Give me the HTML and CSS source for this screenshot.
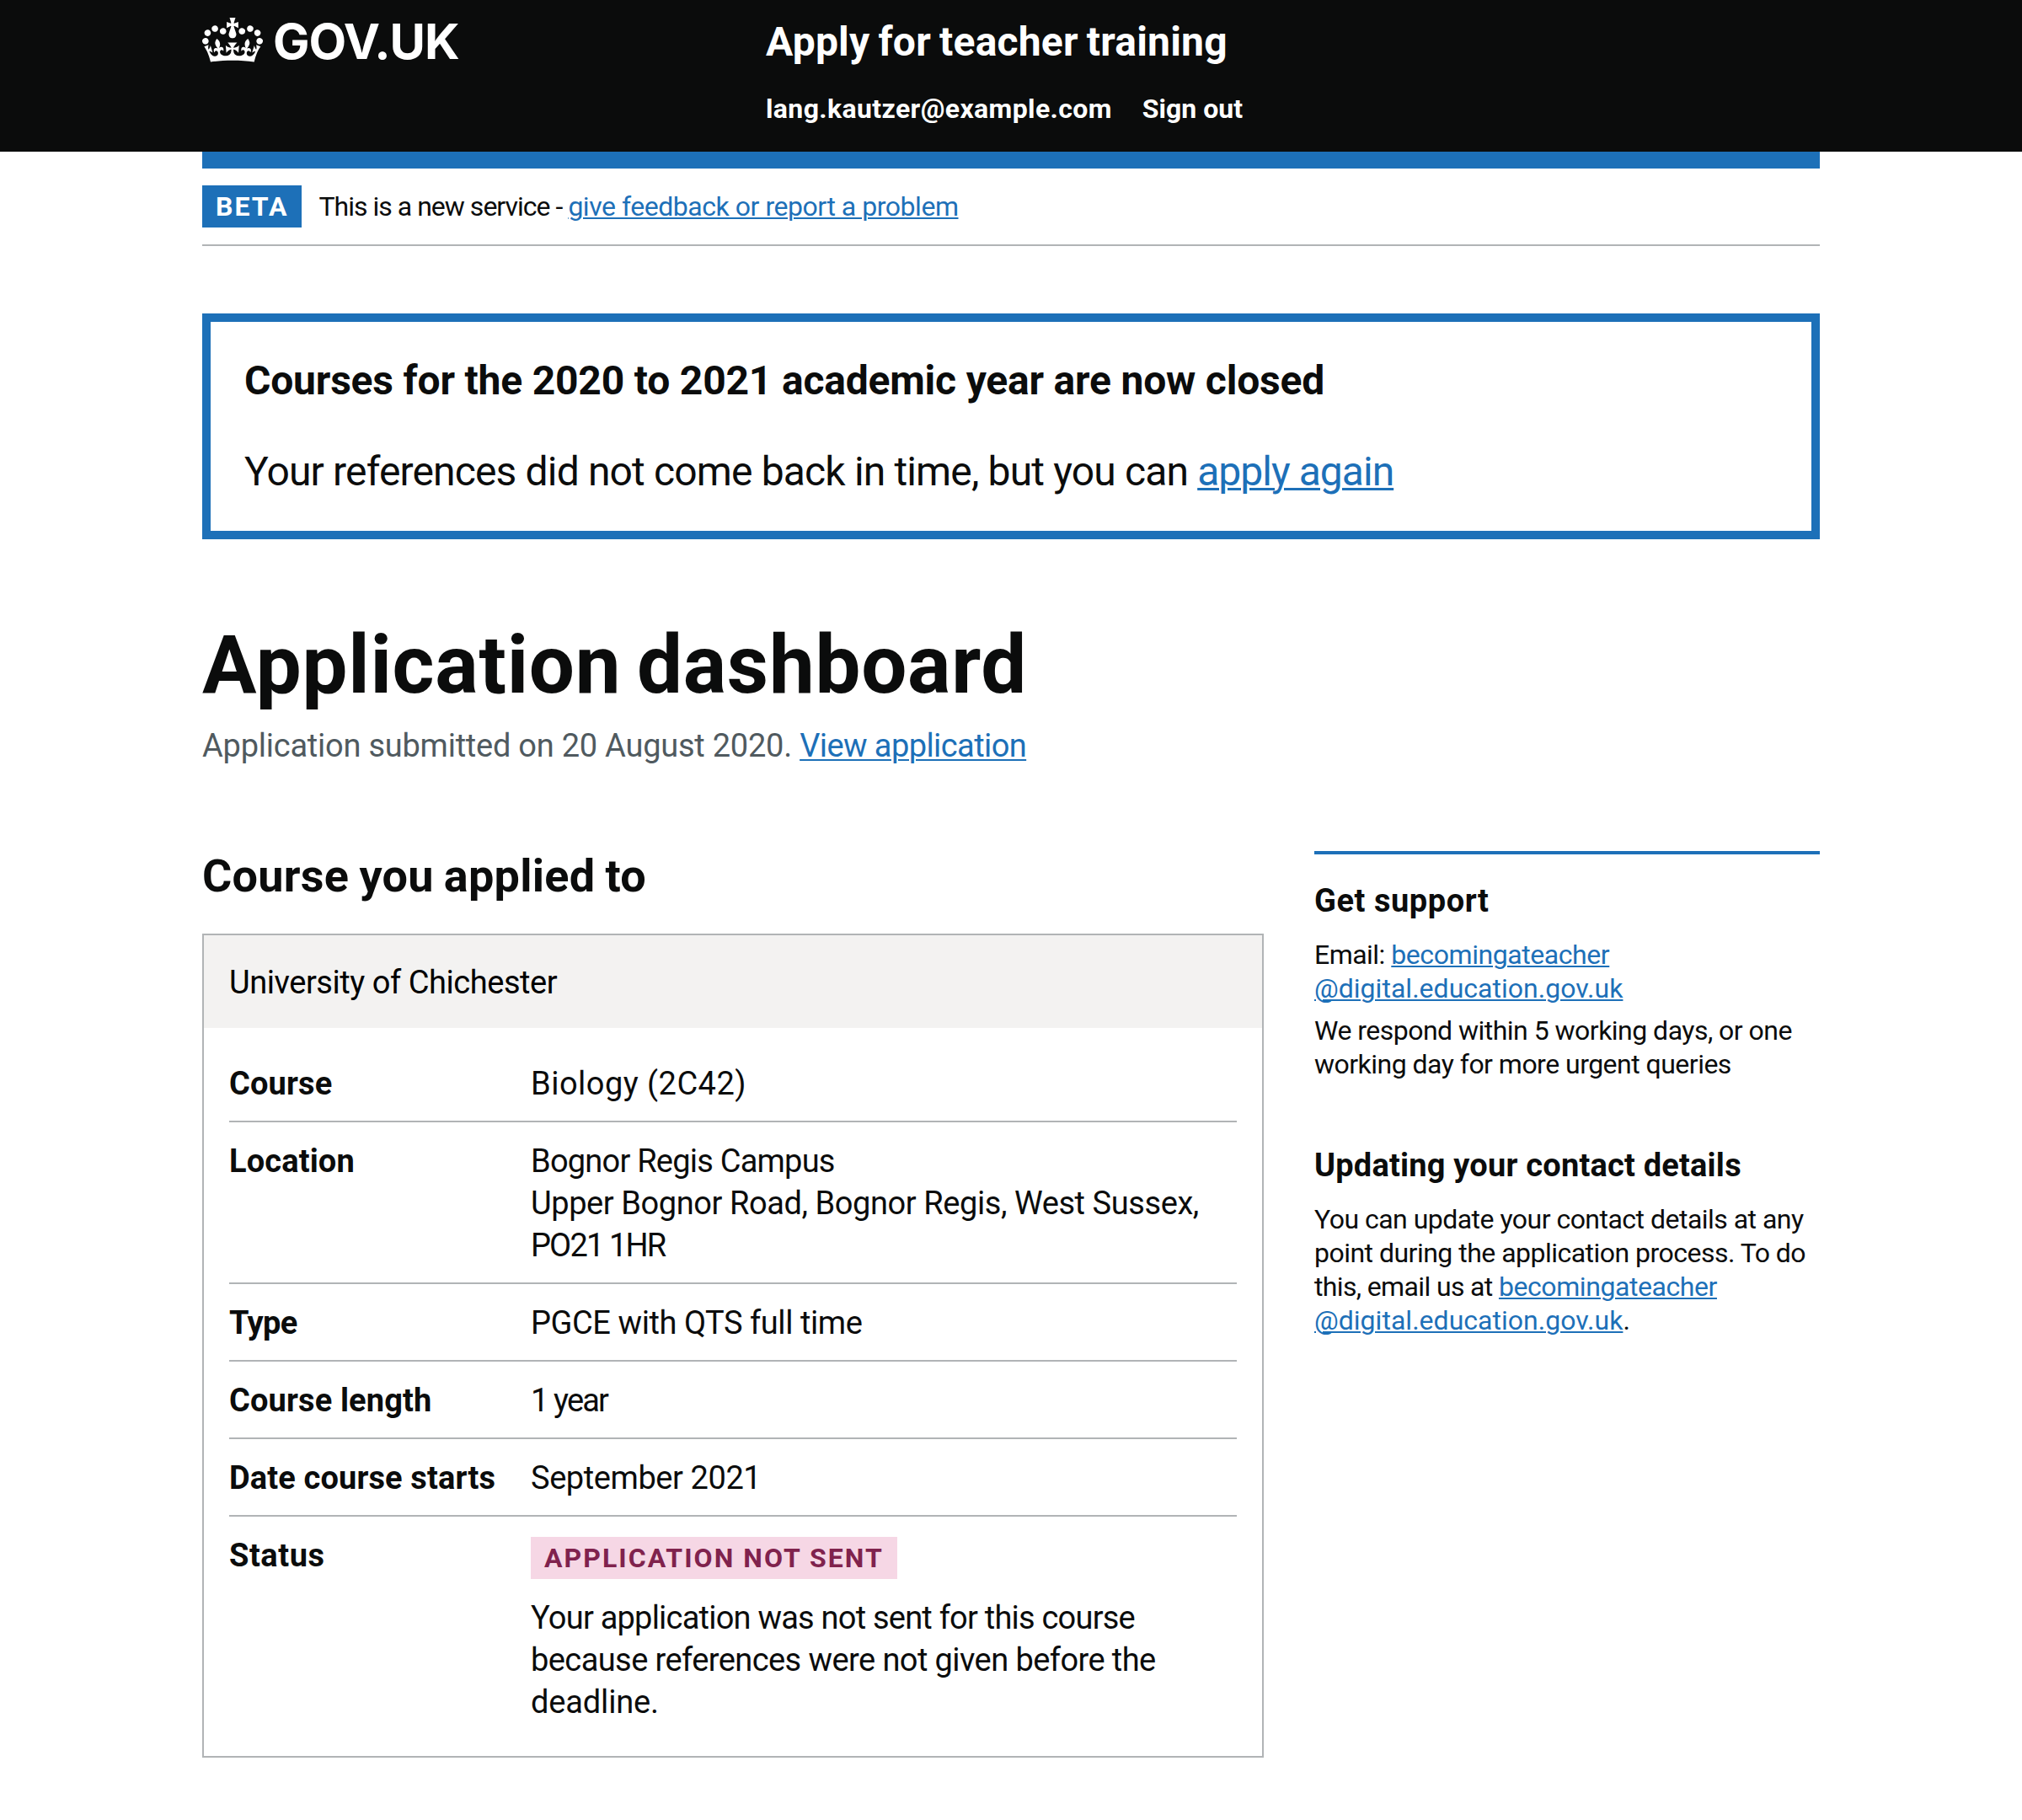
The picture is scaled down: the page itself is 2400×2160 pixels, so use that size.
FILE: index.html
```html
<!DOCTYPE html>
<html lang="en">
<head>
<meta charset="utf-8">
<title>Application dashboard - Apply for teacher training - GOV.UK</title>
<link rel="stylesheet" href="styles.css">
</head>
<body>
<header class="header">
  <div class="container header-inner">
    <div class="logo">
      <svg class="crown" viewBox="0 0 132 97" width="72" height="53" aria-hidden="true"><path fill="currentColor" fill-rule="evenodd" d="M25 30.2c3.5 1.5 7.7-.2 9.1-3.7 1.5-3.6-.2-7.8-3.9-9.2-3.6-1.4-7.6.3-9.1 3.9-1.4 3.5.3 7.5 3.9 9zM9 39.5c3.6 1.5 7.8-.2 9.2-3.7 1.5-3.6-.2-7.8-3.9-9.1-3.6-1.5-7.6.2-9.1 3.8-1.4 3.5.3 7.5 3.8 9zM4.4 57.2c3.5 1.5 7.7-.2 9.1-3.8 1.5-3.6-.2-7.7-3.9-9.1-3.5-1.5-7.6.3-9.1 3.8-1.4 3.5.3 7.6 3.9 9.1zm38.3-21.4c3.5 1.5 7.7-.2 9.1-3.8 1.5-3.6-.2-7.7-3.9-9.1-3.6-1.5-7.6.3-9.1 3.8-1.3 3.6.4 7.7 3.9 9.1zm64.4-5.6c-3.6 1.5-7.8-.2-9.1-3.7-1.5-3.6.2-7.8 3.8-9.2 3.6-1.4 7.7.3 9.2 3.9 1.3 3.5-.4 7.5-3.9 9zm15.9 9.3c-3.6 1.5-7.7-.2-9.1-3.7-1.5-3.6.2-7.8 3.7-9.1 3.6-1.5 7.7.2 9.2 3.8 1.5 3.5-.3 7.5-3.8 9zm4.7 17.7c-3.6 1.5-7.8-.2-9.2-3.8-1.5-3.6.2-7.7 3.9-9.1 3.6-1.5 7.7.3 9.2 3.8 1.3 3.5-.4 7.6-3.9 9.1zM89.3 35.8c-3.6 1.5-7.8-.2-9.2-3.8-1.4-3.6.2-7.7 3.9-9.1 3.6-1.5 7.7.3 9.2 3.8 1.4 3.6-.3 7.7-3.9 9.1zM69.7 17.7l8.9 4.7V9.3l-8.9 2.8c-.2-.3-.5-.6-.9-.9L72.4 0H59.6l3.5 11.2c-.3.3-.6.5-.9.9l-8.8-2.8v13.1l8.8-4.7c.3.3.6.7.9.9l-5 15.4v.1c-.2.8-.4 1.6-.4 2.4 0 4.1 3.1 7.5 7 8.1h.2c.3 0 .7.1 1 .1.4 0 .7 0 1-.1h.2c4-.6 7.1-4.1 7.1-8.1 0-.8-.1-1.7-.4-2.4V34l-5.1-15.4c.4-.2.7-.6 1-.9zM66 92.8c16.9 0 32.8 1.1 47.1 3.2 4-16.9 8.9-26.7 14-33.5l-9.6-3.4c1 4.9 1.1 7.2 0 10.2-1.5-1.4-3-4.3-4.2-8.7L108.6 76c2.8-2 5-3.2 7.5-3.3-4.4 9.4-10 11.9-13.6 11.2-4.3-.8-6.3-4.6-5.6-7.9 1-4.7 5.7-5.9 8-.5 4.3-8.7-3-11.4-7.6-8.8 7.1-7.2 7.9-13.5 2.1-21.1-8 6.1-8.1 12.3-4.5 20.8-4.7-5.4-12.1-2.5-9.5 6.2 3.4-5.2 7.9-2 7.2 3.1-.6 4.3-6.4 7.8-13.5 7.2-10.3-.9-10.9-8-11.2-13.8 2.5-.5 7.1 1.8 11 7.3L80.2 60c-4.1 4.4-8 5.3-12.3 5.4 1.4-4.4 8-11.6 8-11.6H55.5s6.4 7.2 7.9 11.6c-4.2-.1-8-1-12.3-5.4l1.4 16.4c3.9-5.5 8.5-7.7 10.9-7.3-.3 5.8-.9 12.8-11.1 13.8-7.2.6-12.9-2.9-13.5-7.2-.7-5 3.8-8.3 7.1-3.1 2.7-8.7-4.6-11.6-9.4-6.2 3.7-8.5 3.6-14.7-4.6-20.8-5.8 7.6-5 13.9 2.2 21.1-4.7-2.6-11.9.1-7.7 8.8 2.3-5.5 7.1-4.2 8.1.5.7 3.3-1.3 7.1-5.7 7.9-3.5.7-9-1.8-13.5-11.2 2.5.1 4.7 1.3 7.5 3.3l-4.7-15.4c-1.2 4.4-2.7 7.2-4.3 8.7-1.1-3-.9-5.3 0-10.2l-9.5 3.4c5 6.9 9.9 16.7 14 33.5 14.8-2.1 30.8-3.2 47.7-3.2z"/></svg>
      <span class="logotype">GOV.UK</span>
    </div>
    <div class="header-content">
      <div class="service-name">Apply for teacher training</div>
      <nav class="account">
        <span class="account-email">lang.kautzer@example.com</span>
        <span>Sign out</span>
      </nav>
    </div>
  </div>
</header>

<div class="container">
  <div class="header-bar"></div>
  <div class="phase">
    <strong class="tag tag-beta">BETA</strong>
    <p class="phase-text"><span class="phase-intro">This is a new service - </span><a class="link" href="#">give feedback or report a problem</a></p>
  </div>

  <main>
    <section class="notice">
      <h2 class="notice-title">Courses for the 2020 to 2021 academic year are now closed</h2>
      <p class="notice-text">Your references did not come back in time, but you can <a class="link link-large" href="#">apply again</a></p>
    </section>

    <h1 class="title">Application dashboard</h1>
    <p class="caption">Application submitted on 20 August 2020. <a class="link link-body" href="#">View application</a></p>

    <div class="columns">
      <section>
        <h2 class="section-title">Course you applied to</h2>
        <div class="card">
          <div class="card-header">University of Chichester</div>
          <dl class="summary">
            <div class="row"><dt>Course</dt><dd class="course-name">Biology (2C42)</dd></div>
            <div class="row"><dt>Location</dt><dd><span class="campus">Bognor Regis Campus</span><br><span class="address">Upper Bognor Road, Bognor Regis, West Sussex,</span> <br><span class="postcode">PO21 1HR</span></dd></div>
            <div class="row"><dt class="tight">Type</dt><dd class="address">PGCE with QTS full time</dd></div>
            <div class="row"><dt>Course length</dt><dd class="postcode">1 year</dd></div>
            <div class="row"><dt>Date course starts</dt><dd class="address">September 2021</dd></div>
            <div class="row"><dt class="loose">Status</dt><dd><strong class="tag tag-pink">APPLICATION NOT SENT</strong><p class="status-text"><span class="campus">Your application was not sent for this course</span> because references were not given before the <span class="deadline">deadline.</span></p></dd></div>
          </dl>
        </div>
      </section>

      <aside class="sidebar">
        <h2 class="side-title loose">Get support</h2>
        <p class="side-text">Email: <a class="link" href="#">becomingateacher<br><span class="domain">@digital.education.gov.uk</span></a></p>
        <p class="side-text side-text-next">We respond within 5 working days, or one working day for more urgent queries</p>
        <h2 class="side-title side-title-next">Updating your contact details</h2>
        <p class="side-text">You can update your contact details at any point during the application process. To do <span class="lead">this, email us at </span><a class="link" href="#">becomingateacher<br><span class="domain">@digital.education.gov.uk</span></a>.</p>
      </aside>
    </div>
  </main>
</div>
</body>
</html>
```
FILE: styles.css
```css
* { box-sizing: border-box; }

body {
  margin: 0;
  background: #fff;
  color: #0b0c0c;
  font-family: Roboto, "Liberation Sans", sans-serif;
  font-size: 38px;
  line-height: 50px;
}

h1, h2, p, dl, dd { margin: 0; }

.container { width: 1920px; margin: 0 auto; }

/* Header */
.header { height: 180px; background: #0b0c0c; color: #fff; }
.header-inner { display: flex; }
.logo { display: flex; width: 669px; padding-top: 21px; }
.crown { display: block; flex: none; }
.logotype {
  margin: -7px 0 0 12px;
  font-family: Inter, sans-serif;
  font-size: 58px;
  font-weight: 700;
  line-height: 70px;
  letter-spacing: -1.1px;
}
.header-content { padding-top: 20px; }
.service-name {
  font-size: 48px;
  font-weight: 700;
  line-height: 60px;
  letter-spacing: 0.2px;
  word-spacing: -2px;
}
.account {
  display: flex;
  gap: 36px;
  margin-top: 29px;
  font-size: 32px;
  font-weight: 700;
  line-height: 40px;
}
.account-email { letter-spacing: 0.38px; }
.header-bar { height: 20px; background: #1d70b8; }

/* Links */
.link {
  color: #1d70b8;
  text-decoration: underline;
  text-decoration-thickness: 2px;
  text-underline-offset: 2px;
}
.link-body { letter-spacing: -0.58px; text-underline-offset: 3px; }
.link-large {
  letter-spacing: -0.97px;
  text-decoration-thickness: 3px;
  text-underline-offset: 3px;
}

/* Tags and phase banner */
.tag {
  display: block;
  width: fit-content;
  padding: 0 16px;
  font-size: 32px;
  font-weight: 700;
  line-height: 50px;
  letter-spacing: 2px;
}
.tag-beta { background: #1d70b8; color: #fff; }
.tag-pink {
  margin: 3px 0 21px;
  background: #f6d7e5;
  color: #80224d;
  letter-spacing: 2.05px;
}
.phase {
  display: flex;
  align-items: center;
  gap: 20px;
  padding: 20px 0;
  border-bottom: 2px solid #b1b4b6;
}
.phase-text { font-size: 32px; line-height: 40px; letter-spacing: -0.47px; }
.phase-intro { letter-spacing: -0.98px; }

/* Closed courses notice */
.notice {
  margin-top: 80px;
  padding: 40px;
  border: 10px solid #1d70b8;
  font-size: 48px;
  line-height: 60px;
}
.notice-title { font-size: 48px; letter-spacing: -0.2px; }
.notice-text { margin-top: 48px; letter-spacing: -0.85px; }

/* Page heading */
.title {
  margin-top: 99px;
  font-size: 96px;
  line-height: 100px;
  letter-spacing: 0.75px;
  word-spacing: -6px;
}
.caption { margin-top: 21px; color: #505a5f; letter-spacing: -0.24px; }
.columns {
  display: grid;
  grid-template-columns: 1260px 600px;
  column-gap: 60px;
  margin-top: 100px;
}
.section-title {
  font-size: 54px;
  line-height: 60px;
  letter-spacing: 0.25px;
  word-spacing: -1.5px;
}

/* Course card */
.card { margin-top: 38px; border: 2px solid #b1b4b6; }
.card-header {
  padding: 31px 30px 29px;
  background: #f3f2f1;
  color: #000;
  letter-spacing: -0.45px;
}
.summary { padding: 20px 30px; }
.row {
  display: grid;
  grid-template-columns: 358px 1fr;
  padding: 21px 0 19px;
  border-bottom: 2px solid #b1b4b6;
}
.row:last-child { border-bottom: 0; }
dt { font-weight: 700; letter-spacing: 0.13px; }
dd { letter-spacing: -0.58px; }
.course-name { letter-spacing: 0.48px; }
.campus { letter-spacing: -0.78px; }
.address { letter-spacing: -0.42px; }
.postcode { letter-spacing: -1.85px; }
.deadline { letter-spacing: -0.15px; }
.tight { letter-spacing: -0.6px; }
.loose { letter-spacing: 0.55px; }
.status-text { width: 760px; }

/* Sidebar */
.sidebar { padding-top: 30px; border-top: 4px solid #1d70b8; }
.side-title { margin-bottom: 19px; font-size: 38px; }
.side-title:not(.loose) { letter-spacing: 0.2px; }
.side-title-next { margin-top: 75px; }
.side-text { font-size: 32px; line-height: 40px; letter-spacing: -0.52px; }
.side-text .link { letter-spacing: -0.43px; }
.side-text-next { margin-top: 10px; }
.side-text .domain { letter-spacing: 0.02px; }
.lead { letter-spacing: -0.64px; }
```
